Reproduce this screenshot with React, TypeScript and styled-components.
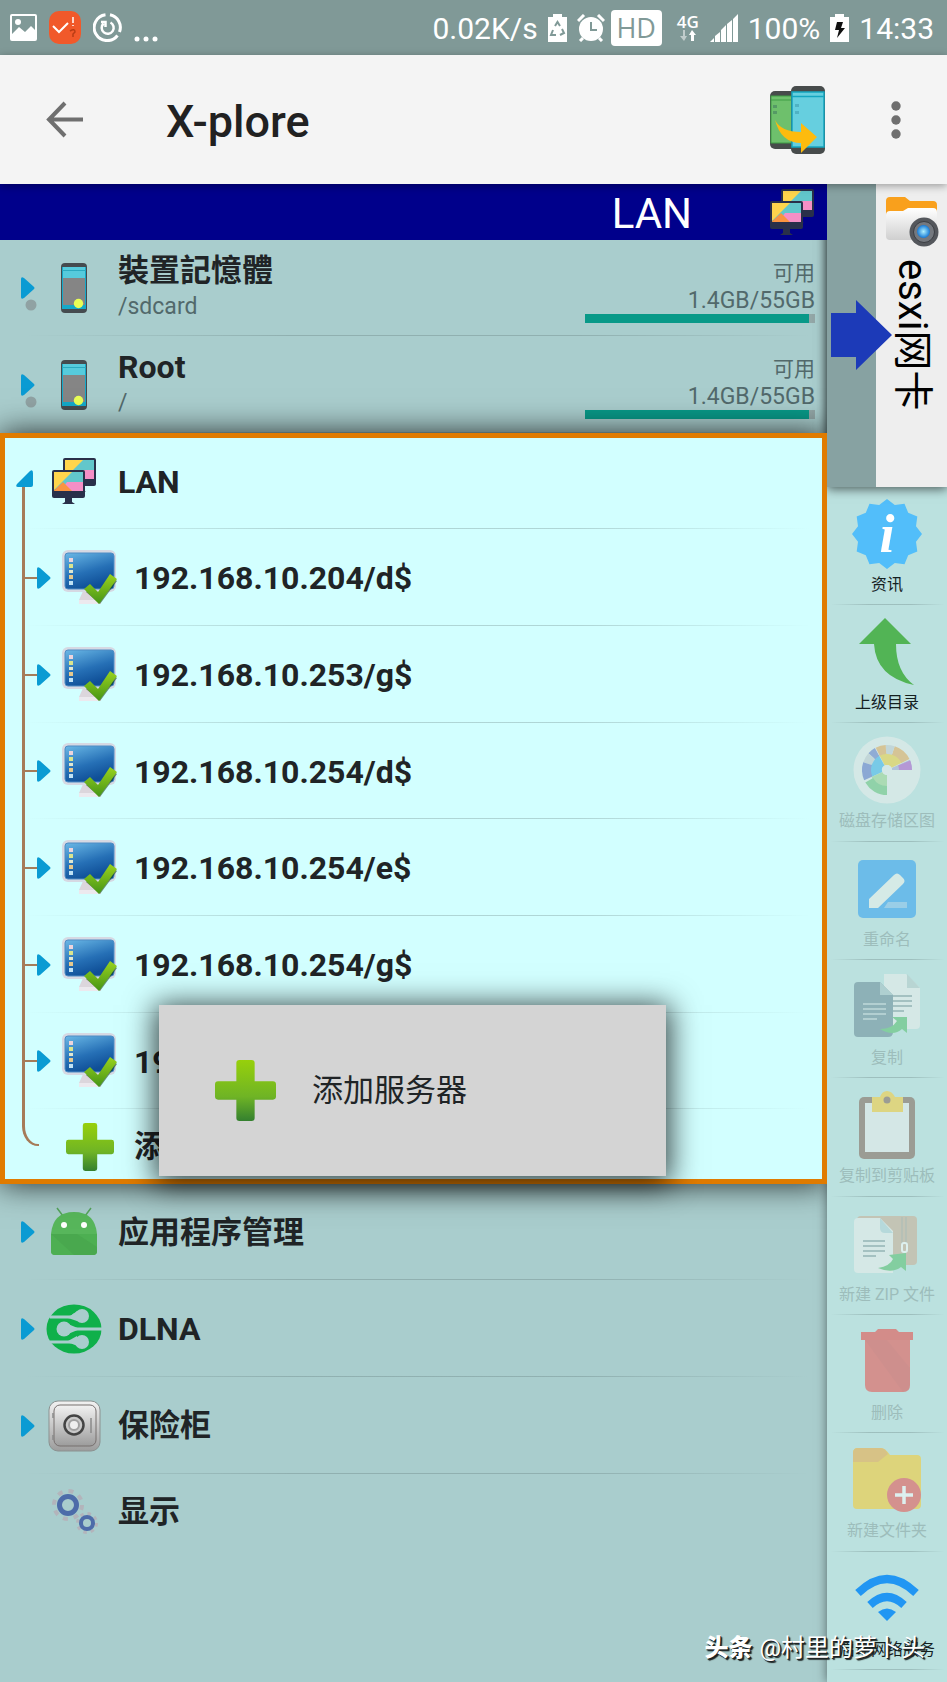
import React from "react";
import styled, { createGlobalStyle, css } from "styled-components";

const colors = {
  status: "#809997",
  header: "#f4f4f4",
  navy: "#00008b",
  pane: "#a9cdcd",
  focus: "#d2ffff",
  orange: "#e07b00",
  toolbar: "#bbe1df",
  ink: "#202426",
  blue: "#0a9bd3",
  trunk: "#a67b58",
};

const GlobalStyle = createGlobalStyle`
  *, *::before, *::after { box-sizing: border-box; }
  body {
    margin: 0;
    background: ${colors.pane};
    color: ${colors.ink};
    font-family: Roboto, "Noto Sans CJK SC", sans-serif;
  }
  button { font: inherit; color: inherit; background: none; border: 0; padding: 0; margin: 0; }
  svg { display: block; flex: none; }
`;

const Page = styled.div`
  position: relative;
  display: flex;
  flex-direction: column;
  min-height: 100vh;
  overflow: hidden;
`;

/* ---------- status bar ---------- */

const StatusBar = styled.div`
  display: flex;
  justify-content: space-between;
  align-items: center;
  height: 55px;
  padding: 0 13px 0 10px;
  background: ${colors.status};
  color: #fff;
  font-size: 30px;
  line-height: 36px;
`;

const StatusGroup = styled.div<{ $gap: number }>`
  display: flex;
  align-items: center;
  gap: ${(p) => p.$gap}px;
`;

const StatusText = styled.span`
  padding-top: 2px;
`;

const HdBadge = styled.span`
  width: 51px;
  height: 36px;
  margin-left: -4px;
  border-radius: 4px;
  background: #fff;
  color: ${colors.status};
  font: 27px/36px "Open Sans", sans-serif;
  text-align: center;
`;

const Network = styled.span`
  display: flex;
  flex-direction: column;
  align-items: center;
  margin: 0 1px 0 5px;
  font: 600 17px/16px "Open Sans", sans-serif;
`;

/* ---------- app header ---------- */

const Header = styled.header`
  position: relative;
  z-index: 3;
  display: flex;
  align-items: center;
  height: 129px;
  padding: 0 46px;
  background: ${colors.header};
  box-shadow: 0 2px 8px rgba(0, 0, 0, 0.35);
`;

const AppTitle = styled.h1`
  flex: 1;
  margin: 0 0 0 83px;
  padding-top: 4px;
  font-size: 45px;
  line-height: 56px;
  font-weight: 500;
  color: #212121;
`;

const IconButton = styled.button`
  display: flex;
`;

const MenuButton = styled(IconButton)`
  margin-left: 65px;
`;

/* ---------- main layout ---------- */

const Main = styled.main`
  flex: 1;
  display: grid;
  grid-template-columns: minmax(0, 1fr) 120px;
`;

const Pane = styled.section`
  overflow: hidden;
  background: ${colors.pane};
`;

const PaneTitle = styled.div`
  position: relative;
  z-index: 2;
  display: flex;
  align-items: center;
  justify-content: flex-end;
  gap: 78px;
  height: 56px;
  padding-right: 13px;
  background: ${colors.navy};
  color: #fff;
  font-size: 42px;
  line-height: 52px;
`;

const PaneName = styled.span`
  padding-top: 4px;
`;

const divider = css`
  background-image: linear-gradient(
    90deg,
    transparent 3%,
    rgba(70, 90, 90, 0.25) 35%,
    rgba(70, 90, 90, 0.25) 70%,
    transparent 98%
  );
  background-repeat: no-repeat;
  background-size: 100% 1px;
  background-position: 0 100%;
`;

const Row = styled.div<{ $last?: boolean }>`
  display: flex;
  align-items: center;
  min-height: ${(p) => (p.$last ? 75 : 97)}px;
  padding-right: 12px;
  ${(p) => !p.$last && divider}

  &:nth-child(3n + 1):not(:last-child) {
    min-height: 96px;
  }
`;

const RowLink = styled.button`
  flex: 1;
  display: flex;
  align-items: center;
  gap: 16px;
  text-align: left;
`;

const Toggle = styled.button`
  display: flex;
  align-items: center;
  width: 46px;
  padding-left: 20px;
`;

const IconSlot = styled.span`
  display: flex;
  justify-content: center;
  width: 56px;
`;

const Name = styled.span<{ $latin?: boolean }>`
  padding-top: 1px;
  font-size: ${(p) => (p.$latin ? 32 : 31)}px;
  line-height: 36px;
  font-weight: 700;
  white-space: nowrap;
`;

const Labels = styled.span`
  display: flex;
  flex-direction: column;
`;

const Path = styled.span`
  font-size: 23px;
  line-height: 36px;
  color: #52696b;
`;

const Usage = styled.div`
  display: flex;
  flex-direction: column;
  width: 230px;
  padding-top: 6px;
  text-align: right;
  font-size: 23px;
  line-height: 27px;
  color: #52696b;
`;

const UsageLabel = styled.span`
  font-size: 21px;
`;

const UsageTrack = styled.span`
  height: 9px;
  background: #93a7a7;
`;

const UsageFill = styled.span`
  display: block;
  height: 100%;
  background: #089988;
`;

/* ---------- focused LAN group ---------- */

const FocusGroup = styled.div`
  position: relative;
  z-index: 2;
  background: ${colors.focus};
  outline: 5px solid ${colors.orange};
  outline-offset: -5px;
  box-shadow: 0 0 30px rgba(0, 0, 0, 0.8);
`;

const ExpandedToggle = styled(Toggle)`
  align-self: stretch;
  padding: 0 0 4px 15px;
  background: linear-gradient(${colors.trunk}, ${colors.trunk}) 22px 52px / 3px 100% no-repeat;
`;

const Branch = styled.button`
  align-self: stretch;
  display: flex;
  align-items: center;
  width: 62px;
  padding-left: 36px;
  background:
    linear-gradient(${colors.trunk}, ${colors.trunk}) 22px 0 / 3px 100% no-repeat,
    linear-gradient(${colors.trunk}, ${colors.trunk}) 22px 50% / 15px 2px no-repeat;
`;

const BranchEnd = styled.span`
  align-self: flex-start;
  width: 17px;
  height: 37px;
  margin: 0 23px 0 22px;
  border-left: 3px solid ${colors.trunk};
  border-bottom: 2px solid ${colors.trunk};
  border-bottom-left-radius: 16px 20px;
`;

const Popup = styled.div`
  position: absolute;
  left: 159px;
  right: 161px;
  bottom: 8px;
  z-index: 4;
  background: #d4d4d4;
  box-shadow: 0 4px 28px 4px rgba(0, 0, 0, 0.75);
`;

const PopupItem = styled.button`
  display: flex;
  align-items: center;
  gap: 36px;
  width: 100%;
  padding: 55px 56px;
  font-size: 31px;
  line-height: 36px;
`;

/* ---------- right column ---------- */

const Side = styled.aside`
  position: relative;
  z-index: 1;
  background: ${colors.toolbar};
  box-shadow: 0 0 10px rgba(0, 0, 0, 0.5);
`;

const OtherPane = styled.div`
  position: relative;
  display: flex;
  justify-content: flex-end;
  height: 303px;
  background: #87a2a2;
  box-shadow: 0 2px 10px rgba(0, 0, 0, 0.6);
`;

const PaneTab = styled.button`
  display: flex;
  flex-direction: column;
  align-items: center;
  gap: 11px;
  width: 71px;
  padding-top: 11px;
  background: #eeeeee;
  color: #000;
`;

const TabText = styled.span`
  writing-mode: vertical-rl;
  text-orientation: sideways;
  font-size: 40px;
  line-height: 44px;
`;

const Pointer = styled.span`
  position: absolute;
  left: 4px;
  top: 116px;
`;

const Tools = styled.div`
  display: flex;
  flex-direction: column;
`;

const Tool = styled.button`
  display: flex;
  flex-direction: column;
  align-items: center;
  gap: 6px;
  height: 118px;
  padding-top: 12px;
  font-size: 16px;
  line-height: 20px;
  color: #14201f;
  white-space: nowrap;
  ${divider}

  &:nth-child(3n) {
    height: 119px;
  }

  &:disabled {
    color: #9dbdbb;
  }

  &:disabled svg {
    opacity: 0.5;
  }
`;

const Watermark = styled.div`
  position: absolute;
  right: 22px;
  bottom: 17px;
  z-index: 5;
  display: flex;
  gap: 7px;
  color: #fff;
  font-size: 24px;
  line-height: 34px;
  text-shadow: 1px 1px 0 #1c2222, 2px 2px 1px #1c2222;
`;

const WatermarkBrand = styled.span`
  font-weight: 900;
`;

/* ---------- icons ---------- */

const Triangle = () => (
  <svg width="16" height="24" viewBox="0 0 16 24">
    <path d="M1 3q0-3 3-1l9.500 8.500q2 1.500 0 3l-9.500 8.500q-3 2-3-1z" fill={colors.blue} />
  </svg>
);

const OpenTriangle = () => (
  <svg width="20" height="20" viewBox="0 0 20 20">
    <path d="M15 2q3-2 3 2v12q0 2-2 2H3q-3 0-1-3z" fill={colors.blue} />
  </svg>
);

const DottedTriangle = () => (
  <svg width="18" height="60" viewBox="0 0 18 60">
    <circle cx="11" cy="47" r="5.500" fill="#90a2a3" />
    <path d="M1 21q0-3 3-1l9.500 8.500q2 1.500 0 3l-9.500 8.500q-3 2-3-1z" fill={colors.blue} />
  </svg>
);

const PhoneIcon = () => (
  <svg width="28" height="52" viewBox="0 0 28 52">
    <rect x="1" y="1" width="26" height="50" rx="4" fill="#454b4f" />
    <rect x="2" y="5" width="24" height="42" fill="#14a9c9" />
    <rect x="3" y="5" width="22" height="11" fill="#56cbdc" />
    <path d="M2 8.500h24" stroke="#2baac0" />
    <rect x="3" y="16" width="22" height="27" fill="#858585" />
    <circle cx="18.500" cy="41.500" r="4.700" fill="#eaff56" />
  </svg>
);

const Screen = ({ x, y }: { x: number; y: number }) => (
  <g transform={`translate(${x} ${y})`}>
    <rect width="33" height="28" rx="2" fill="#29304a" />
    <path d="M2 2h29v11H17L2 20z" fill="#62c7cb" />
    <path d="M15 12h16v9H8z" fill="#f58fc6" />
    <path d="M2 20.500L11 12l9 9H2z" fill="#fb9440" />
    <path d="M2 2h18L2 20z" fill="#ffd54c" />
    <path d="M13 28h7v4l3 2H10l3-2z" fill="#29304a" />
  </g>
);

const MonitorsIcon = () => (
  <svg width="44" height="46" viewBox="0 0 44 46">
    <Screen x={11} y={0} />
    <Screen x={0} y={12} />
  </svg>
);

const ServerIcon = () => (
  <svg width="56" height="58" viewBox="0 0 56 58">
    <defs>
      <linearGradient id="srvScreen" x1="0" y1="0" x2="0.400" y2="1">
        <stop offset="0" stopColor="#6ab8e6" />
        <stop offset="0.600" stopColor="#2670b6" />
        <stop offset="1" stopColor="#0f4f97" />
      </linearGradient>
      <linearGradient id="srvTick" x1="0" y1="0" x2="0" y2="1">
        <stop offset="0" stopColor="#9ad31e" />
        <stop offset="1" stopColor="#459416" />
      </linearGradient>
    </defs>
    <path d="M22 40h14l3 15H17v-4z" fill="#dcd6dc" />
    <path d="M17 51h22v4H17z" fill="#ece9ee" />
    <rect x="0" y="1" width="54" height="42" rx="6" fill="#d6d9e3" />
    <rect x="3" y="4" width="49" height="36" rx="3" fill="url(#srvScreen)" stroke="#4f8cc4" />
    <g fill="#dfe7d2">
      <rect x="7" y="9" width="4" height="4" fill="#ecd4dc" />
      <rect x="7" y="15" width="4" height="4" fill="#d9e58f" />
      <rect x="7" y="21" width="4" height="3" />
      <rect x="7" y="26" width="4" height="4" fill="#e6c98d" />
      <rect x="7" y="32" width="4" height="4" fill="#bfe2f5" />
    </g>
    <path d="M24 43l5-5 8 7L49 27l6 5-17 23z" fill="#1d4a1c" opacity="0.600" />
    <path d="M22 40l6-5 8 8L48 25l7 5-18 25z" fill="url(#srvTick)" />
  </svg>
);

const PlusIcon = ({ size }: { size: number }) => (
  <svg width={size} height={size} viewBox="0 0 60 60">
    <defs>
      <linearGradient id="plusFill" x1="0" y1="0" x2="0" y2="1">
        <stop offset="0" stopColor="#97d00b" />
        <stop offset="0.600" stopColor="#6fb425" />
        <stop offset="1" stopColor="#34802f" />
      </linearGradient>
    </defs>
    <path
      d="M24 0h12q3 0 3 3v18h18q3 0 3 3v12q0 3-3 3H39v18q0 3-3 3H24q-3 0-3-3V39H3q-3 0-3-3V24q0-3 3-3h18V3q0-3 3-3z"
      fill="url(#plusFill)"
    />
  </svg>
);

const RobotIcon = () => (
  <svg width="48" height="50" viewBox="0 0 48 50">
    <path d="M13 9L7 1M35 9l6-8" stroke="#55a55b" strokeWidth="1.500" />
    <path d="M1 27Q3 5 24 5t23 22v17q0 4-4 4H5q-4 0-4-4z" fill="#57b65b" />
    <path d="M1 27h46v17q0 4-4 4H5q-4 0-4-4z" fill="#4daf52" />
    <path d="M1 27h26l20 13v4q0 4-4 4H24z" fill="#449e49" opacity="0.400" />
    <circle cx="14" cy="18" r="3" fill="#fff" />
    <circle cx="34" cy="18" r="3" fill="#fff" />
  </svg>
);

const DlnaIcon = () => (
  <svg width="56" height="50" viewBox="0 0 56 50">
    <ellipse cx="28" cy="25" rx="27.500" ry="24.500" fill="#0fb04a" />
    <g fill="none" stroke={colors.pane} strokeWidth="3">
      <path d="M4 13h19q3 0 5-2h6" />
      <path d="M56 25H30q-4 0-6 2" />
      <path d="M4 38h19q3 0 5 1h6" />
    </g>
    <g fill={colors.pane}>
      <circle cx="36" cy="12" r="7" />
      <circle cx="18" cy="25" r="7.500" />
      <circle cx="36" cy="38" r="7" />
      <path d="M22 14l9-7v10zM34 25l-12-5v10zM22 37l9-5v10z" />
    </g>
  </svg>
);

const SafeIcon = () => (
  <svg width="54" height="52" viewBox="0 0 54 52">
    <defs>
      <linearGradient id="safeBody" x1="0" y1="0" x2="0" y2="1">
        <stop offset="0" stopColor="#f2f2f2" />
        <stop offset="1" stopColor="#9c9c9c" />
      </linearGradient>
    </defs>
    <rect x="2" y="1" width="51" height="50" rx="9" fill="url(#safeBody)" stroke="#8b9190" />
    <rect x="7" y="5" width="42" height="41" rx="6" fill="url(#safeBody)" stroke="#77706f" />
    <path d="M6 13v5M6 35v5M44 18v15" stroke="#8a8a8a" strokeWidth="1.500" />
    <circle cx="27" cy="25" r="9.500" fill="#c9c9c9" stroke="#444" strokeWidth="2.500" />
    <circle cx="27" cy="25" r="5" fill="#eee" stroke="#a0a0a0" strokeWidth="2" />
  </svg>
);

const GearsIcon = () => (
  <svg width="48" height="46" viewBox="0 0 48 46" fill="none">
    <circle cx="18" cy="16" r="14" stroke="#b3b4bb" strokeWidth="4" strokeDasharray="5 6" />
    <circle cx="18" cy="16" r="8.500" stroke="#4d6ca9" strokeWidth="5" />
    <circle cx="37" cy="34" r="9.500" stroke="#b3b4bb" strokeWidth="3" strokeDasharray="3.500 4" />
    <circle cx="37" cy="34" r="6" stroke="#4d6ca9" strokeWidth="4" />
  </svg>
);

const FolderCameraIcon = () => (
  <svg width="54" height="53" viewBox="0 0 54 53">
    <defs>
      <linearGradient id="folderPaper" x1="0" y1="0" x2="0" y2="1">
        <stop offset="0" stopColor="#fff" />
        <stop offset="1" stopColor="#cfcfcf" />
      </linearGradient>
      <radialGradient id="lens">
        <stop offset="0" stopColor="#aef0ff" />
        <stop offset="1" stopColor="#1479d6" />
      </radialGradient>
    </defs>
    <path d="M1 6q0-4 4-4h15l5 4h23q4 0 4 4v12H1z" fill="#f9a01c" />
    <path d="M1 20q0-4 4-4h13l5-3h25q4 0 4 4v24q0 4-4 4H5q-4 0-4-4z" fill="url(#folderPaper)" />
    <circle cx="39" cy="37" r="14.500" fill="#54575c" />
    <circle cx="39" cy="37" r="10.500" fill="#74787e" stroke="#3b3e43" />
    <circle cx="38.500" cy="36.500" r="6.500" fill="url(#lens)" />
  </svg>
);

const TwoPhonesIcon = () => (
  <svg width="56" height="68" viewBox="0 0 56 68">
    <rect x="0" y="5" width="30" height="58" rx="5" fill="#474b4b" />
    <rect x="1" y="10" width="24" height="47" fill="#6ec06c" stroke="#3f9d44" />
    <path d="M1 14h22" stroke="#3f9d44" />
    <rect x="21" y="0" width="34" height="68" rx="5" fill="#474b4b" />
    <rect x="22" y="6" width="32" height="55" fill="#66cfdf" stroke="#14a6c0" strokeWidth="1.500" />
    <path d="M22 10.500h32" stroke="#14a6c0" strokeWidth="1.500" />
    <g fill="#559a65">
      <rect x="3" y="19" width="4" height="3" />
      <rect x="3" y="25" width="4" height="3" />
      <rect x="25" y="18" width="4" height="3" fill="#4fb2c4" />
      <rect x="25" y="25" width="4" height="3" fill="#4fb2c4" />
    </g>
    <path d="M5 34q6 12 26 12v-9l16 14-16 16v-10Q11 57 5 34z" fill="#fdbb0e" />
  </svg>
);

const starPoints = Array.from({ length: 24 }, (_, i) => {
  const r = i % 2 ? 30 : 35;
  const a = (i * Math.PI) / 12;
  return `${(35 + r * Math.cos(a)).toFixed(1)},${(35 + r * Math.sin(a)).toFixed(1)}`;
}).join(" ");

const InfoIcon = () => (
  <svg width="70" height="70" viewBox="0 0 70 70">
    <polygon points={starPoints} fill="#52befa" />
    <text
      x="35"
      y="53"
      textAnchor="middle"
      fill="#fff"
      fontFamily="Liberation Serif, serif"
      fontStyle="italic"
      fontWeight="700"
      fontSize="54"
    >
      i
    </text>
  </svg>
);

const UpIcon = () => (
  <svg width="70" height="70" viewBox="0 0 70 70">
    <path d="M33 1l26 26H44q0 28 18 41Q24 60 22 27H7z" fill="#52b455" />
  </svg>
);

const sector = (r0: number, r1: number, from: number, to: number) => {
  const p = (r: number, deg: number) => {
    const a = (deg * Math.PI) / 180;
    return `${(35 + r * Math.cos(a)).toFixed(1)} ${(35 + r * Math.sin(a)).toFixed(1)}`;
  };
  return `M${p(r0, from)}L${p(r1, from)}A${r1} ${r1} 0 0 0 ${p(r1, to)}L${p(r0, to)}A${r0} ${r0} 0 0 1 ${p(r0, from)}z`;
};

const slices: [number, number, number, number, string][] = [
  [5, 25, 0, -24, "#a9a9d8"],
  [12, 25, 0, -22, "#b052cc"],
  [5, 17, -26, -117, "#f8d02e"],
  [16, 25, -26, -72, "#f0a850"],
  [16, 25, -72, -93, "#c9cdd2"],
  [16, 25, -93, -117, "#f0a850"],
  [5, 17, -119, -204, "#38b5f0"],
  [16, 25, -119, -138, "#6478cc"],
  [16, 25, -138, -162, "#c9cdd2"],
  [16, 25, -162, -204, "#5c70ca"],
  [5, 17, -204, -270, "#9cd68a"],
  [16, 25, -210, -270, "#67c475"],
];

const DiskMapIcon = () => (
  <svg width="70" height="70" viewBox="0 0 70 70">
    <circle cx="35" cy="35" r="33.500" fill="#eef0ee" />
    {slices.map(([r0, r1, from, to, fill]) => (
      <path key={`${r0}${from}`} d={sector(r0, r1, from, to)} fill={fill} />
    ))}
    <circle cx="35" cy="35" r="5" fill="#eef0ee" />
  </svg>
);

const RenameIcon = () => (
  <svg width="70" height="70" viewBox="0 0 70 70">
    <rect x="6" y="6" width="58" height="58" rx="5" fill="#2098f3" />
    <path d="M17 54v-9l25-24q3-3 6 0l3 3q3 3 0 6L26 54z" fill="#f0f3ee" />
    <path d="M36 48h19v6H32z" fill="#7bbcf0" />
  </svg>
);

const CopyIcon = () => (
  <svg width="70" height="70" viewBox="0 0 70 70">
    <path d="M32 2h22l14 14v37q0 4-4 4H32z" fill="#f0efed" />
    <path d="M55 2v14h13z" fill="#b7cbc9" />
    <path d="M40 24h20M40 29h20M40 34h20M40 39h12" stroke="#8fa3a5" strokeWidth="2" />
    <path d="M2 14q0-4 4-4h22l13 13v37q0 5-5 5H6q-4 0-4-4z" fill="#608391" />
    <path d="M28 10v13h13z" fill="#a3bfc3" />
    <path d="M11 32h23M11 37h23M11 42h23M11 47h14" stroke="#aabfc4" strokeWidth="2" />
    <path d="M28 57q12 0 17-8l-5-4h15v16l-5-4q-9 8-22 0z" fill="#4dbd62" />
  </svg>
);

const ClipboardIcon = () => (
  <svg width="70" height="70" viewBox="0 0 70 70">
    <rect x="7" y="7" width="56" height="62" rx="5" fill="#7d5a4c" />
    <path d="M13 13h44v49H13z" fill="#eeeeee" />
    <path d="M20 7h8q2-6 7-6t8 6h8v15H20z" fill="#ffcb28" />
    <circle cx="35" cy="10" r="3.500" fill="#7d5a4c" />
  </svg>
);

const ZipIcon = () => (
  <svg width="70" height="70" viewBox="0 0 70 70">
    <rect x="5" y="7" width="60" height="49" rx="4" fill="#cca88c" />
    <path d="M50 8v30M54 8v26" stroke="#9a9890" />
    <rect x="50" y="34" width="5" height="9" rx="2" fill="none" stroke="#fff" strokeWidth="2" />
    <path d="M2 13q0-4 4-4h22l13 13v42H6q-4 0-4-4z" fill="#f0efed" />
    <path d="M28 9v10q0 5 5 5h8z" fill="#b2d3d8" />
    <path d="M11 32h22M11 37h22M11 42h22M11 47h13" stroke="#8fa3a5" strokeWidth="2" />
    <path d="M26 59q12-2 15-9l-4-4 17-2v18l-5-4q-9 7-23 1z" fill="#4dbd62" />
  </svg>
);

const DeleteIcon = () => (
  <svg width="70" height="70" viewBox="0 0 70 70">
    <path d="M9 5h14l3-3h18l3 3h14v8H9z" fill="#ec3a36" />
    <path d="M13 13h45v45q0 7-7 7H20q-7 0-7-7z" fill="#ec4340" />
    <path d="M13 13h22l23 28v17q0 7-7 7z" fill="#c63a38" opacity="0.300" />
  </svg>
);

const NewFolderIcon = () => (
  <svg width="70" height="70" viewBox="0 0 70 70">
    <path d="M1 8q0-5 5-5h23q4 0 9 7h27q4 0 4 4v46q0 4-4 4H5q-4 0-4-4z" fill="#ffc919" />
    <path d="M1 8q0-5 5-5h23q4 0 7 6l-10 8H1z" fill="#f4a52f" />
    <circle cx="52" cy="50" r="17" fill="#ee4340" />
    <path d="M43 50h18M52 41v18" stroke="#fff" strokeWidth="3.500" />
  </svg>
);

const WifiIcon = () => (
  <svg width="70" height="70" viewBox="0 0 70 70" fill="none" stroke="#2196f3">
    <path d="M6 29Q35 1 64 29" strokeWidth="8" />
    <path d="M18 41Q35 25 52 41" strokeWidth="8" />
    <path d="M26 48q9-7 18 0l-9 9z" fill="#2196f3" stroke="none" />
  </svg>
);

const BatteryIcon = ({ children }: { children: React.ReactNode }) => (
  <svg width="19" height="28" viewBox="0 0 19 28">
    <path d="M5 0h9v3h5v25H0V3h5z" fill="#fff" />
    {children}
  </svg>
);

/* ---------- data ---------- */

const storages = [
  { name: "裝置記憶體", path: "/sdcard", used: 97.5, latin: false },
  { name: "Root", path: "/", used: 97.5, latin: true },
];

const servers = [
  "192.168.10.204/d$",
  "192.168.10.253/g$",
  "192.168.10.254/d$",
  "192.168.10.254/e$",
  "192.168.10.254/g$",
  "192.168.10.254/h$",
];

const tools = [
  { label: "资讯", icon: <InfoIcon />, on: true },
  { label: "上级目录", icon: <UpIcon />, on: true },
  { label: "磁盘存储区图", icon: <DiskMapIcon /> },
  { label: "重命名", icon: <RenameIcon /> },
  { label: "复制", icon: <CopyIcon /> },
  { label: "复制到剪贴板", icon: <ClipboardIcon /> },
  { label: "新建 ZIP 文件", icon: <ZipIcon /> },
  { label: "删除", icon: <DeleteIcon /> },
  { label: "新建文件夹", icon: <NewFolderIcon /> },
  { label: "启动网络服务", icon: <WifiIcon />, on: true },
];

const places = [
  { name: "应用程序管理", icon: <RobotIcon />, latin: false },
  { name: "DLNA", icon: <DlnaIcon />, latin: true },
  { name: "保险柜", icon: <SafeIcon />, latin: false },
];

export default function App() {
  return (
    <Page>
      <GlobalStyle />
      <StatusBar>
        <StatusGroup $gap={12}>
          <svg width="27" height="27" viewBox="0 0 27 27">
            <path d="M2 0h23q2 0 2 2v23q0 2-2 2H2q-2 0-2-2V2q0-2 2-2zm0 2v18l7-7 6 5 6-6 4 4V2z" fill="#fff" fillRule="evenodd" />
            <circle cx="8" cy="8" r="3" fill="#fff" />
          </svg>
          <svg width="32" height="33" viewBox="0 0 32 33">
            <rect width="32" height="33" rx="10" fill="#f1592a" />
            <path d="M4 15l6 6 9-9" fill="none" stroke="#fff" strokeWidth="2" />
            <path d="M24 6v6M24 14v1" stroke="#fff" strokeWidth="1.500" />
            <path d="M21 20q5-3 5 1l-2 2v3" fill="none" stroke="#b83c14" strokeWidth="1.500" />
          </svg>
          <svg width="29" height="29" viewBox="0 0 29 29" fill="none" stroke="#fff">
            <path d="M12.500 1.700A13 13 0 1 0 24.500 22.500M17 1.700A13 13 0 0 1 26.500 19" strokeWidth="3" />
            <path d="M17.500 9.500a6 6 0 1 1-7 1M8 9h4.500v5" strokeWidth="2.500" />
          </svg>
          <svg width="26" height="29" viewBox="0 0 26 29" fill="#fff">
            <circle cx="3" cy="26" r="2.500" />
            <circle cx="12" cy="26" r="2.500" />
            <circle cx="21" cy="26" r="2.500" />
          </svg>
        </StatusGroup>
        <StatusGroup $gap={10}>
          <StatusText>0.02K/s</StatusText>
          <BatteryIcon>
            <path d="M7 12l2.500-4 2.500 4M14 15l2 4-4 2M8 21H3l2-5" fill="none" stroke={colors.status} strokeWidth="2" />
          </BatteryIcon>
          <svg width="28" height="28" viewBox="0 0 28 28">
            <circle cx="14" cy="15" r="12" fill="#fff" />
            <path d="M1 7l6-6M27 7l-6-6M6 24l-3 3M22 24l3 3" stroke="#fff" strokeWidth="3" />
            <path d="M14 8v8h6" fill="none" stroke={colors.status} strokeWidth="2" />
          </svg>
          <HdBadge>HD</HdBadge>
          <Network>
            4G
            <svg width="16" height="11" viewBox="0 0 16 11">
              <path d="M3 0h2v6h2l-3 5-4-5h3z" fill="#c0cccb" />
              <path d="M12 0l4 5h-2v6h-3V5H9z" fill="#fff" />
            </svg>
          </Network>
          <svg width="28" height="28" viewBox="0 0 28 28" fill="#fff">
            <path d="M0 28l4-4v4zM5 22l5-4v10H5zM11 16l5-5v17h-5zM17 10l5-4v22h-5zM23 5l5-5v28h-5z" />
          </svg>
          <StatusText>100%</StatusText>
          <BatteryIcon>
            <path d="M7 8h6l-2 6h4L7 24l2-8H5z" fill="#111" />
          </BatteryIcon>
          <StatusText>14:33</StatusText>
        </StatusGroup>
      </StatusBar>

      <Header>
        <IconButton aria-label="Back">
          <svg width="37" height="37" viewBox="0 0 37 37" fill="none" stroke="#6f6f6f" strokeWidth="4">
            <path d="M19 2L3 18.500 19 35M3 18.500h34" />
          </svg>
        </IconButton>
        <AppTitle>X-plore</AppTitle>
        <IconButton aria-label="Transfer">
          <TwoPhonesIcon />
        </IconButton>
        <MenuButton aria-label="Menu">
          <svg width="10" height="38" viewBox="0 0 10 38" fill="#6f6f6f">
            <circle cx="5" cy="5" r="4.700" />
            <circle cx="5" cy="19" r="4.700" />
            <circle cx="5" cy="33" r="4.700" />
          </svg>
        </MenuButton>
      </Header>

      <Main>
        <Pane>
          <PaneTitle>
            <PaneName>LAN</PaneName>
            <MonitorsIcon />
          </PaneTitle>

          <div>
            {storages.map((s) => (
              <Row key={s.name}>
                <Toggle aria-label={`Expand ${s.name}`}>
                  <DottedTriangle />
                </Toggle>
                <RowLink>
                  <IconSlot>
                    <PhoneIcon />
                  </IconSlot>
                  <Labels>
                    <Name $latin={s.latin}>{s.name}</Name>
                    <Path>{s.path}</Path>
                  </Labels>
                </RowLink>
                <Usage>
                  <UsageLabel>可用</UsageLabel>
                  <span>1.4GB/55GB</span>
                  <UsageTrack>
                    <UsageFill style={{ width: `${s.used}%` }} />
                  </UsageTrack>
                </Usage>
              </Row>
            ))}
          </div>

          <FocusGroup>
            <Row>
              <ExpandedToggle aria-label="Collapse LAN">
                <OpenTriangle />
              </ExpandedToggle>
              <RowLink>
                <IconSlot>
                  <MonitorsIcon />
                </IconSlot>
                <Name $latin>LAN</Name>
              </RowLink>
            </Row>
            {servers.map((name) => (
              <Row key={name}>
                <Branch aria-label={`Expand ${name}`}>
                  <Triangle />
                </Branch>
                <RowLink>
                  <IconSlot>
                    <ServerIcon />
                  </IconSlot>
                  <Name $latin>{name}</Name>
                </RowLink>
              </Row>
            ))}
            <Row $last>
              <BranchEnd />
              <RowLink>
                <IconSlot>
                  <PlusIcon size={48} />
                </IconSlot>
                <Name>添加服务器</Name>
              </RowLink>
            </Row>
            <Popup role="menu">
              <PopupItem role="menuitem">
                <PlusIcon size={61} />
                添加服务器
              </PopupItem>
            </Popup>
          </FocusGroup>

          <div>
            {places.map((p) => (
              <Row key={p.name}>
                <Toggle aria-label={`Expand ${p.name}`}>
                  <Triangle />
                </Toggle>
                <RowLink>
                  <IconSlot>{p.icon}</IconSlot>
                  <Name $latin={p.latin}>{p.name}</Name>
                </RowLink>
              </Row>
            ))}
            <Row $last>
              <Toggle as="span" />
              <RowLink>
                <IconSlot>
                  <GearsIcon />
                </IconSlot>
                <Name>显示</Name>
              </RowLink>
            </Row>
          </div>
        </Pane>

        <Side>
          <OtherPane>
            <PaneTab>
              <FolderCameraIcon />
              <TabText>esxi网卡</TabText>
            </PaneTab>
            <Pointer>
              <svg width="61" height="70" viewBox="0 0 61 70">
                <path d="M0 13h25V0l36 35-36 35V57H0z" fill="#1c3ab8" />
              </svg>
            </Pointer>
          </OtherPane>
          <Tools>
            {tools.map((t) => (
              <Tool key={t.label} disabled={!t.on}>
                {t.icon}
                {t.label}
              </Tool>
            ))}
          </Tools>
        </Side>
      </Main>

      <Watermark>
        <WatermarkBrand>头条</WatermarkBrand>
        <span>@村里的萝卜头</span>
      </Watermark>
    </Page>
  );
}
